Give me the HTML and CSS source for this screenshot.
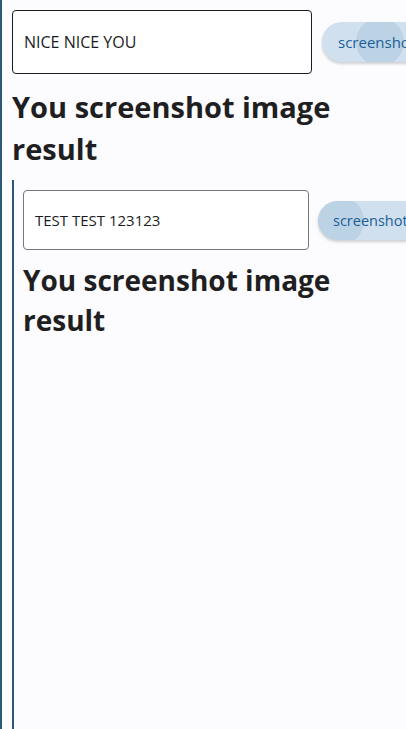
FILE: index.html
```html
<!DOCTYPE html>
<html>
<head>
<meta charset="utf-8">
<link rel="stylesheet" href="styles.css">
</head>
<body>
<div class="frame outer">
  <div class="row">
    <div class="field"><span>NICE NICE YOU</span></div>
    <button class="btn"><span class="ripple r1"></span><span class="label">screenshot</span></button>
  </div>
  <h1 class="title">You screenshot image result</h1>
  <div class="frame inner">
    <div class="row">
      <div class="field"><span>TEST TEST 123123</span></div>
      <button class="btn"><span class="ripple r2"></span><span class="label">screenshot</span></button>
    </div>
    <h1 class="title">You screenshot image result</h1>
  </div>
</div>
</body>
</html>
```
FILE: styles.css
```css
html, body {
  margin: 0;
  padding: 0;
  background: #fcfcff;
  height: 100%;
  overflow: hidden;
}
body {
  font-family: "Open Sans", "Noto Sans", sans-serif;
  color: #1a1c1e;
}
.frame {
  border-left: 2px solid #2b5878;
  box-sizing: border-box;
}
.outer {
  height: 729px;
  padding: 10px 0 0 10px;
  width: 406px;
  overflow: hidden;
}
.row {
  display: flex;
  align-items: center;
  gap: 10px;
  flex-wrap: nowrap;
}
.field {
  flex: 0 0 auto;
  width: 300px;
  height: 64px;
  box-sizing: border-box;
  border: 1px solid #1a1c1e;
  border-radius: 4px;
  background: #fff;
  display: flex;
  align-items: center;
  padding-left: 11px;
  font-size: 16px;
}
.btn {
  flex: 0 0 auto;
  position: relative;
  overflow: hidden;
  height: 40px;
  border: none;
  border-radius: 20px;
  background: #d0e0ee;
  padding: 0 16px;
  font-family: "Open Sans", "Noto Sans", sans-serif;
  font-size: 15px;
  color: #1a5f97;
  box-shadow: 0 2px 3px rgba(0,0,0,0.18);
}
.label { position: relative; }
.ripple {
  position: absolute;
  border-radius: 50%;
  background: rgba(120,160,200,0.22);
}
.r1 { width: 48px; height: 48px; left: 34px; top: -4px; }
.r2 { width: 48px; height: 48px; left: -2px; top: -4px; }
.title {
  margin: 12px 0 10px 0;
  font-size: 29px;
  line-height: 42px;
  font-weight: 700;
  color: #1f1f22;
  width: 350px;
}
.inner {
  height: 600px;
  padding: 10px 0 0 9px;
}
.inner .row { gap: 9px; }
.inner .field {
  width: 286px;
  height: 60px;
  border-color: #74777f;
  font-size: 15px;
}
.inner .btn {
  height: 39px;
  font-size: 14.5px;
  padding: 0 15px;
}
.inner .title {
  font-size: 28px;
  line-height: 40px;
  margin-top: 10px;
  width: 340px;
}
```
